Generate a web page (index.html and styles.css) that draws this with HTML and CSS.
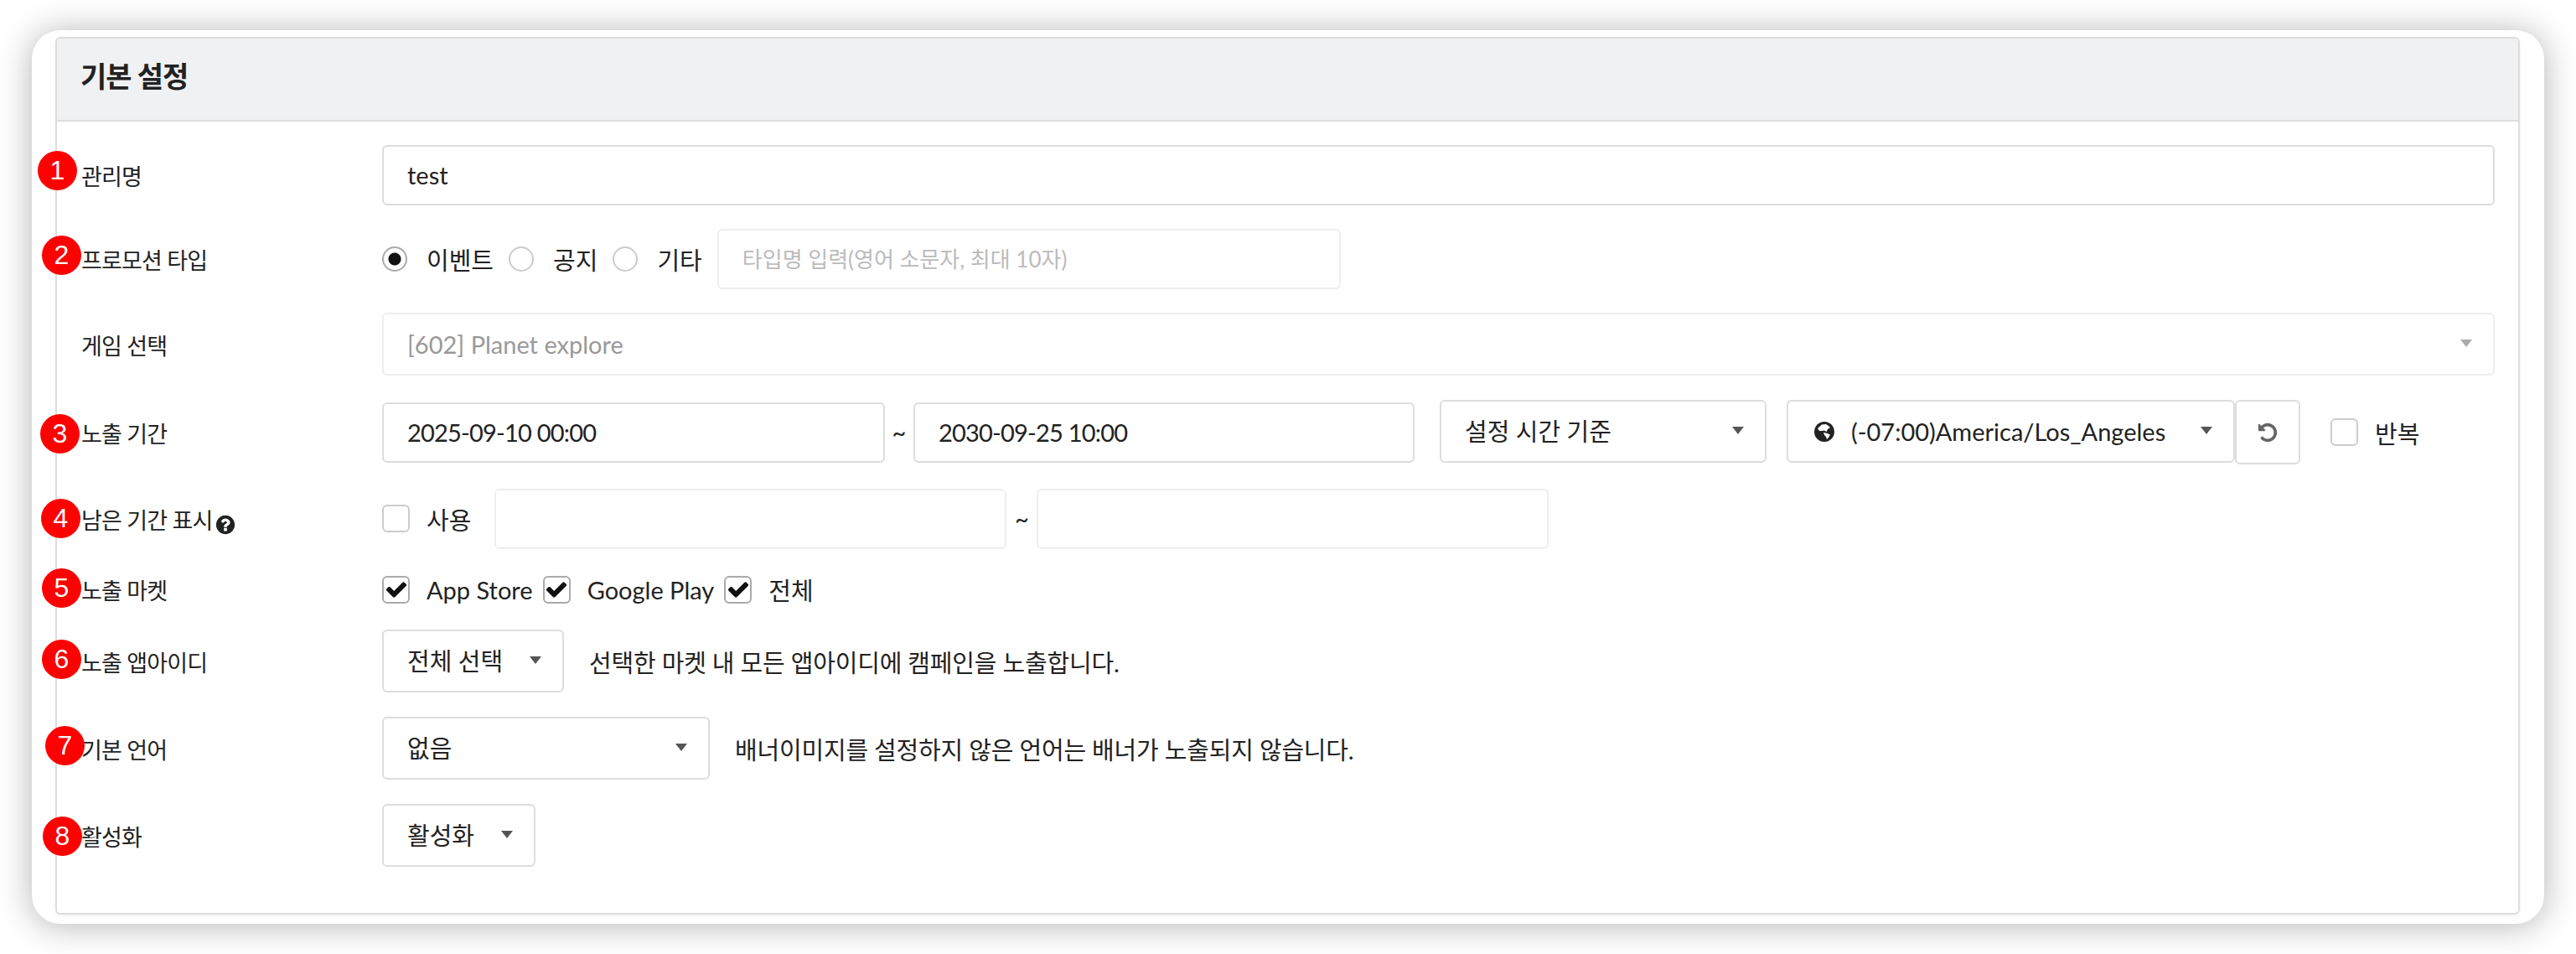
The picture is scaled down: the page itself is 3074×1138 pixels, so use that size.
FILE: index.html
```html
<!DOCTYPE html>
<html lang="ko">

<head>
    <meta charset="UTF-8">
    <meta name="viewport" content="width=device-width, initial-scale=1.0">
    <title>기본 설정</title>
    <link rel="stylesheet" href="styles.css">
</head>

<body>

    <svg class="defs" width="0" height="0">
        <symbol id="icon-check" viewBox="0 0 1792 1792"><path d="M1671 566q0 40-28 68l-724 724-136 136q-28 28-68 28t-68-28l-136-136-362-362q-28-28-28-68t28-68l136-136q28-28 68-28t68 28l294 295 656-657q28-28 68-28t68 28l136 136q28 28 28 68z"/></symbol>
    </svg>

    <div class="card">
        <div class="panel">
            <h2 class="panel-head">기본 설정</h2>

            <div class="panel-body">
                <!-- 관리명 -->
                <div class="row row-name">
                    <span class="step step-1">1</span>
                    <label class="row-label">관리명</label>
                    <div class="field field-full">test</div>
                </div>

                <!-- 프로모션 타입 -->
                <div class="row row-type">
                    <span class="step step-2">2</span>
                    <label class="row-label">프로모션 타입</label>
                    <span class="radio radio-on"></span><span class="opt opt-radio">이벤트</span>
                    <span class="radio"></span><span class="opt opt-radio">공지</span>
                    <span class="radio"></span><span class="opt opt-radio">기타</span>
                    <div class="field field-off field-type">타입명 입력(영어 소문자, 최대 10자)</div>
                </div>

                <div class="row row-game">
                    <label class="row-label">게임 선택</label>
                    <div class="field field-off field-full select select-off">[602] Planet explore<i class="caret"></i></div>
                </div>

                <!-- 노출 기간 -->
                <div class="row row-period">
                    <span class="step step-3">3</span>
                    <label class="row-label">노출 기간</label>
                    <div class="field field-date">2025-09-10 00:00</div>
                    <span class="tilde">~</span>
                    <div class="field field-date field-date2">2030-09-25 10:00</div>
                    <div class="field select select-base">설정 시간 기준<i class="caret"></i></div>
                    <div class="field select select-zone">
                        <svg class="globe" viewBox="0 0 24 24"><circle cx="12" cy="12" r="12" fill="#222"/><path d="M4 8l5-4.500 5-.5 3 2 2 2-3 2-1.500 3-2.500-1.500-3 .5-3 0zM11 13l5 1 3 1.500-2 3.500-2 2-1-3-2-2z" fill="#fff"/></svg>
                        <span>(-07:00)America/Los_Angeles</span><i class="caret"></i>
                    </div>
                    <div class="reset">
                        <svg viewBox="0 0 1792 1792"><path d="M1664 896q0 156-61 298t-164 245-245 164-298 61q-172 0-327-72.500t-264-204.500q-7-10-6.500-22.500t8.500-20.500l137-138q10-9 25-9 16 2 23 12 73 95 179 147t225 52q104 0 198.500-40.500t163.500-109.500 109.500-163.500 40.500-198.500-40.500-198.500-109.500-163.500-163.500-109.500-198.500-40.500q-98 0-188 35.500t-160 101.500l137 138q31 30 14 69-17 40-59 40h-448q-26 0-45-19t-19-45v-448q0-42 40-59 39-17 69 14l130 129q107-101 244.500-156.500t284.500-55.500q156 0 298 61t245 164 164 245 61 298z"/></svg>
                    </div>
                    <span class="check check-repeat"></span><span class="opt">반복</span>
                </div>

                <!-- 남은 기간 표시 -->
                <div class="row row-left">
                    <span class="step step-4">4</span>
                    <label class="row-label">남은 기간 표시<svg class="help" viewBox="0 0 1792 1792"><path d="M1024 1376v-192q0-14-9-23t-23-9h-192q-14 0-23 9t-9 23v192q0 14 9 23t23 9h192q14 0 23-9t9-23zm256-672q0-88-55.500-163t-138.500-116-170-41q-243 0-371 213-15 24 8 42l132 100q7 6 19 6 16 0 25-12 53-68 86-92 34-24 86-24 48 0 85.500 26t37.500 59q0 38-20 61t-68 45q-63 28-115.500 86.500t-52.500 125.500v36q0 14 9 23t23 9h192q14 0 23-9t9-23q0-19 21.500-49.500t54.500-49.500q32-18 49-28.500t46-35 44.500-48 28-60.500 12.500-81zm384 192q0 209-103 385.500t-279.500 279.500-385.500 103-385.500-103-279.500-279.500-103-385.500 103-385.500 279.500-279.500 385.500-103 385.500 103 279.500 279.500 103 385.500z"/></svg></label>
                    <span class="check"></span><span class="opt opt-use">사용</span>
                    <div class="field field-off field-left"></div>
                    <span class="tilde tilde-wide">~</span>
                    <div class="field field-off field-left"></div>
                </div>

                <!-- 노출 마켓 -->
                <div class="row row-market">
                    <span class="step step-5">5</span>
                    <label class="row-label">노출 마켓</label>
                    <span class="check check-on"><svg><use href="#icon-check"/></svg></span><span class="opt">App Store</span>
                    <span class="check check-on"><svg><use href="#icon-check"/></svg></span><span class="opt">Google Play</span>
                    <span class="check check-on"><svg><use href="#icon-check"/></svg></span><span class="opt">전체</span>
                </div>

                <div class="row row-select">
                    <span class="step step-6">6</span>
                    <label class="row-label">노출 앱아이디</label>
                    <div class="field select select-app">전체 선택<i class="caret"></i></div>
                    <span class="note">선택한 마켓 내 모든 앱아이디에 캠페인을 노출합니다.</span>
                </div>

                <div class="row row-select">
                    <span class="step step-7">7</span>
                    <label class="row-label">기본 언어</label>
                    <div class="field select select-lang">없음<i class="caret"></i></div>
                    <span class="note">배너이미지를 설정하지 않은 언어는 배너가 노출되지 않습니다.</span>
                </div>

                <div class="row row-select">
                    <span class="step step-8">8</span>
                    <label class="row-label">활성화</label>
                    <div class="field select select-active">활성화<i class="caret"></i></div>
                </div>
            </div>
        </div>
    </div>

</body>

</html>
```

FILE: styles.css
```css
body {
    margin: 0;
    height: 1138px;
    overflow: hidden;
    background-color: #fff;
    color: #222;
    font-family: Lato, "Noto Sans CJK KR", sans-serif;
    font-size: 29px;
}

.defs {
    position: absolute;
}

.card {
    box-sizing: border-box;
    width: 2998px;
    height: 1066px;
    margin: 36px 0 0 38px;
    padding: 8px 29px 11px 28px;
    background-color: white;
    border-radius: 34px;
    box-shadow: 0 2px 40px rgba(0, 0, 0, 0.3);
}

.panel {
    height: 100%;
    box-sizing: border-box;
    border: 2px solid #ddd;
    border-radius: 6px;
    box-shadow: 0 2px 4px rgba(0, 0, 0, 0.05);
}

.panel-head {
    box-sizing: border-box;
    height: 99px;
    margin: 0;
    padding-left: 28px;
    line-height: 89px;
    font-size: 34px;
    font-weight: 700;
    letter-spacing: -1px;
    background-color: #f0f1f3;
    border-bottom: 2px solid #ddd;
    border-radius: 4px 4px 0 0;
}

.panel-body {
    padding: 28px 28px 0 29px;
}

.row {
    position: relative;
    display: flex;
    align-items: center;
    margin-bottom: 29px;
}

.row-name {
    height: 71px;
    margin-bottom: 28px;
}

.row-type {
    height: 73px;
    margin-bottom: 28px;
}

.row-game,
.row-select {
    height: 75px;
}

.row-period {
    height: 77px;
}

.row-left {
    height: 71px;
    margin-bottom: 33px;
}

.row-market {
    height: 32px;
    margin-bottom: 32px;
}

.row-label {
    flex: none;
    width: 359px;
    margin-top: 1px;
    font-size: 27px;
    letter-spacing: -0.8px;
}

.field {
    box-sizing: border-box;
    height: 72px;
    padding: 0 28px;
    line-height: 67px;
    background-color: white;
    border: 2px solid #ddd;
    border-radius: 6px;
}

.field-full {
    flex: 1;
}

.field-off {
    color: #999;
    border-color: #eee;
}

.field-type {
    width: 744px;
    color: #bbb;
    font-size: 26px;
    line-height: 68px;
}

.field-date {
    width: 600px;
    margin-top: 3px;
    margin-bottom: 2px;
    letter-spacing: -0.8px;
    line-height: 68px;
}

.field-date2 {
    width: 598px;
}

.field-left {
    width: 611px;
}

.select {
    position: relative;
    height: 75px;
    line-height: 72px;
}

.caret {
    position: absolute;
    top: 30px;
    right: 25px;
    border-top: 9px solid #555;
    border-left: 7px solid transparent;
    border-right: 7px solid transparent;
}

.select-off {
    color: #999;
}

.select-off .caret {
    border-top-color: #aaa;
}

.select-base {
    width: 390px;
    margin-left: 30px;
    margin-bottom: 2px;
}

.select-zone {
    display: flex;
    align-items: center;
    width: 535px;
    margin-left: 24px;
    margin-bottom: 2px;
    padding-left: 31px;
}

.globe {
    flex: none;
    width: 24px;
    height: 24px;
    margin-right: 20px;
}

.reset {
    display: flex;
    align-items: center;
    justify-content: center;
    box-sizing: border-box;
    width: 78px;
    height: 77px;
    border: 2px solid #ddd;
    border-radius: 6px;
}

.reset svg {
    width: 26px;
    height: 26px;
    fill: #666;
}

.radio {
    box-sizing: border-box;
    flex: none;
    width: 30px;
    height: 30px;
    margin-right: 3px;
    border: 2px solid #ccc;
    border-radius: 50%;
    background-color: white;
}

.radio-on {
    border-color: #aaa;
    background: radial-gradient(circle, #111 0 7px, white 8px);
}

.check {
    display: flex;
    align-items: center;
    justify-content: center;
    box-sizing: border-box;
    flex: none;
    width: 33px;
    height: 33px;
    border: 2px solid #ccc;
    border-radius: 6px;
}

.check-on {
    border-color: #aaa;
}

.check-on svg {
    flex: none;
    width: 28px;
    height: 28px;
    fill: #111;
}

.check-repeat {
    margin-left: 36px;
}

.opt {
    margin: 0 12px 0 20px;
}

.opt-radio {
    margin-right: 18px;
}

.opt-use {
    margin-right: 28px;
}

.tilde {
    flex: none;
    width: 34px;
    text-align: center;
}

.tilde-wide {
    width: 36px;
}

.note {
    margin-left: 30px;
    letter-spacing: -0.2px;
}

.select-app {
    width: 217px;
}

.select-lang {
    width: 391px;
}

.select-active {
    width: 183px;
}

.help {
    width: 26px;
    height: 26px;
    margin-left: 3px;
    fill: #222;
    vertical-align: -8px;
}

.step {
    position: absolute;
    top: 50%;
    width: 47px;
    height: 47px;
    border-radius: 50%;
    background-color: #f00;
    color: white;
    font-family: "Liberation Sans", sans-serif;
    font-size: 32px;
    line-height: 46px;
    text-align: center;
    z-index: 1;
}

.step-1 { left: -52px; margin-top: -29px; }
.step-2 { left: -47px; margin-top: -28px; }
.step-3 { left: -49px; margin-top: -22px; }
.step-4 { left: -48px; margin-top: -24px; }
.step-5 { left: -47px; margin-top: -25px; }
.step-6 { left: -47px; margin-top: -26px; }
.step-7 { left: -43px; margin-top: -27px; }
.step-8 { left: -46px; margin-top: -23px; }
```
